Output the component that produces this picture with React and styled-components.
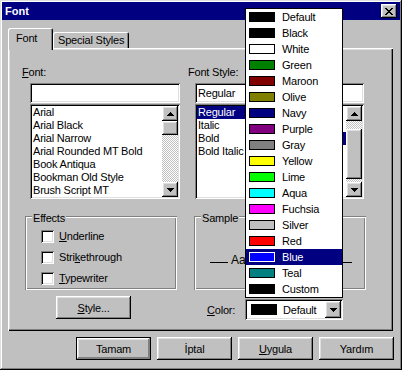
import React from "react";
import styled, { createGlobalStyle, css } from "styled-components";

const Global = createGlobalStyle`
  html, body { margin: 0; padding: 0; background: #c0c0c0; }
  body {
    font-family: "Liberation Sans", Arial, sans-serif;
    font-size: 11px;
    letter-spacing: -0.2px;
    color: #000;
  }
  * { box-sizing: border-box; }
`;

const raised = css`
  box-shadow: inset -1px -1px #000, inset 1px 1px #fff, inset -2px -2px #808080,
    inset 2px 2px #dfdfdf;
`;
const sunken = css`
  box-shadow: inset 1px 1px #808080, inset -1px -1px #fff, inset 2px 2px #000,
    inset -2px -2px #dfdfdf;
`;
const dither = css`
  background: repeating-conic-gradient(#c0c0c0 0 25%, #fff 0 50%) 0 0 / 2px 2px;
`;

const Dialog = styled.div`
  position: relative;
  width: 402px;
  height: 370px;
  padding: 2px;
  background: #c0c0c0;
  box-shadow: inset -1px -1px #000, inset 1px 1px #dfdfdf, inset -2px -2px #808080,
    inset 2px 2px #fff;
  display: flex;
  flex-direction: column;
`;

const TitleBar = styled.div`
  height: 18px;
  flex: none;
  background: #000080;
  color: #fff;
  display: flex;
  align-items: center;
  justify-content: space-between;
  padding: 0 3px 0 3px;
`;

const TitleText = styled.span`
  font-weight: bold;
  font-size: 11px;
  letter-spacing: 0;
`;

const CloseButton = styled.div`
  width: 16px;
  height: 14px;
  background: #c0c0c0;
  ${raised};
  display: flex;
  align-items: center;
  justify-content: center;
`;

const Body = styled.div`
  padding: 8px 6px 0 6px;
  display: flex;
  flex-direction: column;
`;

const TabStrip = styled.div`
  height: 20px;
  display: flex;
  align-items: flex-end;
`;

const Tab = styled.div`
  position: relative;
  z-index: ${(p) => (p.$active ? 1 : 0)};
  width: ${(p) => p.$w}px;
  height: ${(p) => (p.$active ? 22 : 16)}px;
  margin-bottom: ${(p) => (p.$active ? -2 : 0)}px;
  padding: 0 0 ${(p) => (p.$active ? 2 : 0)}px ${(p) => p.$pad}px;
  display: flex;
  align-items: center;
  white-space: nowrap;
  background: #c0c0c0;
  border-radius: 2px 2px 0 0;
  box-shadow: inset 1px 1px #fff, inset -1px 0 #000, inset -2px 0 #808080;
`;

const Panel = styled.div`
  width: 385px;
  height: 283px;
  flex: none;
  box-shadow: inset 1px 1px #fff, inset -1px -1px #000, inset -2px -2px #808080,
    inset 2px 2px #dfdfdf;
  padding-top: 18px;
`;

const TopGrid = styled.div`
  margin-left: 14px;
  display: grid;
  grid-template-columns: 158px 100px 68px;
  column-gap: 8px;
`;

const Column = styled.div`
  display: flex;
  flex-direction: column;
`;

const Label = styled.div`
  line-height: 13px;
  height: 13px;
  margin-bottom: 4px;
  white-space: nowrap;
`;

const Key = styled.span`
  text-decoration: underline;
`;

const Field = styled.div`
  margin-left: ${(p) => p.$indent}px;
  display: flex;
  flex-direction: column;
`;

const TextBox = styled.div`
  height: 20px;
  background: #fff;
  ${sunken};
  padding: 0 3px;
  display: flex;
  align-items: center;
  white-space: nowrap;
  overflow: hidden;
`;

const ListBox = styled.div`
  margin-top: 1px;
  height: 95px;
  background: #fff;
  ${sunken};
  padding: 2px;
  display: flex;
`;

const Rows = styled.div`
  flex: 1;
  min-width: 0;
  overflow: hidden;
`;

const Row = styled.div`
  height: 13px;
  line-height: 13px;
  padding-left: 1px;
  white-space: nowrap;
  background: ${(p) => (p.$selected ? "#000080" : "transparent")};
  color: ${(p) => (p.$selected ? "#fff" : "#000")};
`;

const ScrollTrack = styled.div`
  width: 16px;
  flex: none;
  display: flex;
  flex-direction: column;
`;

const ScrollBtn = styled.div`
  height: 15px;
  flex: none;
  background: #c0c0c0;
  ${raised};
  display: flex;
  align-items: center;
  justify-content: center;
`;

const TrackPart = styled.div`
  ${dither};
  flex: ${(p) => (p.$grow ? "1 1 0" : "none")};
  height: ${(p) => (p.$grow ? "auto" : `${p.$h}px`)};
`;

const Thumb = styled.div`
  flex: none;
  height: ${(p) => p.$h}px;
  background: #c0c0c0;
  ${raised};
`;

const BottomGrid = styled.div`
  margin: 17px 0 0 17px;
  display: grid;
  grid-template-columns: 152px 172px;
  column-gap: 17px;
  row-gap: 6px;
  align-items: start;
`;

const GroupBox = styled.div`
  position: relative;
  height: 74px;
  box-shadow: inset 1px 1px #808080, inset -1px -1px #fff, inset 2px 2px #fff,
    inset -2px -2px #808080;
  padding: ${(p) => (p.$sample ? "37px 14px 0 16px" : "14px 0 0 16px")};
`;

const Legend = styled.span`
  position: absolute;
  top: -4px;
  left: 7px;
  padding: 0 1px;
  line-height: 13px;
  background: #c0c0c0;
`;

const CheckList = styled.div`
  display: flex;
  flex-direction: column;
  gap: 8px;
`;

const CheckRow = styled.div`
  display: flex;
  align-items: center;
  gap: 5px;
  height: 13px;
  line-height: 13px;
`;

const CheckBox = styled.span`
  width: 13px;
  height: 13px;
  flex: none;
  background: #fff;
  ${sunken};
`;

const SampleRow = styled.div`
  display: flex;
  align-items: flex-start;
`;

const SampleLine = styled.span`
  height: 1px;
  margin-top: 9px;
  background: #000;
  flex: ${(p) => (p.$grow ? "1 1 0" : "none")};
  width: ${(p) => (p.$grow ? "auto" : "18px")};
`;

const SampleText = styled.span`
  font-size: 12px;
  line-height: 14px;
  letter-spacing: 0;
  margin: 0 3px;
  white-space: nowrap;
`;

const Button = styled.div`
  width: 75px;
  height: 23px;
  display: flex;
  align-items: center;
  justify-content: center;
  background: #c0c0c0;
  ${raised};
  ${(p) =>
    p.$default &&
    css`
      border: 1px solid #000;
      box-shadow: inset -1px -1px #808080, inset 1px 1px #fff, inset -2px -2px #808080,
        inset 2px 2px #dfdfdf;
    `}
`;

const StyleButton = styled(Button)`
  margin-left: 31px;
`;

const ColorField = styled.div`
  padding: 3px 0 0 13px;
  display: flex;
  align-items: center;
`;

const ColorLabel = styled.span`
  width: 38px;
`;

const ComboWrap = styled.div`
  position: relative;
  width: 98px;
`;

const Combo = styled.div`
  height: 21px;
  background: #fff;
  ${sunken};
  padding: 2px;
  display: flex;
  align-items: center;
`;

const ComboSwatch = styled.span`
  width: 26px;
  height: 11px;
  margin-left: 4px;
  background: #000;
`;

const ComboText = styled.span`
  margin-left: 6px;
  flex: 1;
`;

const ComboButton = styled.div`
  width: 16px;
  height: 17px;
  background: #c0c0c0;
  ${raised};
  display: flex;
  align-items: center;
  justify-content: center;
`;

const DropList = styled.div`
  position: absolute;
  left: 0;
  bottom: calc(100% + 1px);
  width: 98px;
  z-index: 10;
  background: #fff;
  border: 1px solid #000;
`;

const DropItem = styled.div`
  height: 16px;
  display: flex;
  align-items: center;
  padding-left: 3px;
  background: ${(p) => (p.$selected ? "#000080" : "#fff")};
  color: ${(p) => (p.$selected ? "#fff" : "#000")};
`;

const Swatch = styled.span`
  width: 26px;
  height: 10px;
  flex: none;
  border: 1px solid ${(p) => (p.$selected ? "#fff" : "#000")};
  background: ${(p) => p.$color};
`;

const DropText = styled.span`
  margin-left: 7px;
`;

const ButtonRow = styled.div`
  margin-top: 6px;
  display: flex;
  justify-content: flex-end;
  gap: 6px;
`;

const Arrow = ({ dir }) => (
  <svg width="7" height="4" viewBox="0 0 7 4" shapeRendering="crispEdges">
    <path
      fill="#000"
      d={
        dir === "up"
          ? "M3 0h1v1h1v1h1v1h1v1H0V3h1V2h1V1h1z"
          : "M0 0h7v1H6v1H5v1H4v1H3V3H2V2H1V1H0z"
      }
    />
  </svg>
);

const xPixels = [
  [0, 0, 2], [6, 0, 2],
  [1, 1, 2], [5, 1, 2],
  [2, 2, 4],
  [3, 3, 2],
  [2, 4, 4],
  [1, 5, 2], [5, 5, 2],
  [0, 6, 2], [6, 6, 2],
];

const CloseGlyph = () => (
  <svg width="8" height="7" viewBox="0 0 8 7" shapeRendering="crispEdges">
    {xPixels.map(([x, y, w], i) => (
      <rect key={i} x={x} y={y} width={w} height={1} fill="#000" />
    ))}
  </svg>
);

const Scrollbar = ({ before, thumb }) => (
  <ScrollTrack>
    <ScrollBtn>
      <Arrow dir="up" />
    </ScrollBtn>
    {before > 0 && <TrackPart $h={before} />}
    <Thumb $h={thumb} />
    <TrackPart $grow />
    <ScrollBtn>
      <Arrow dir="down" />
    </ScrollBtn>
  </ScrollTrack>
);

const fonts = [
  "Arial",
  "Arial Black",
  "Arial Narrow",
  "Arial Rounded MT Bold",
  "Book Antiqua",
  "Bookman Old Style",
  "Brush Script MT",
];
const styles = ["Regular", "Italic", "Bold", "Bold Italic"];
/* the size list lies under the open colour list; only its edge shows */
const sizeRows = 7;
const selectedSize = 2;

const colors = [
  ["Default", "#000000"],
  ["Black", "#000000"],
  ["White", "#ffffff"],
  ["Green", "#008000"],
  ["Maroon", "#800000"],
  ["Olive", "#808000"],
  ["Navy", "#000080"],
  ["Purple", "#800080"],
  ["Gray", "#808080"],
  ["Yellow", "#ffff00"],
  ["Lime", "#00ff00"],
  ["Aqua", "#00ffff"],
  ["Fuchsia", "#ff00ff"],
  ["Silver", "#c0c0c0"],
  ["Red", "#ff0000"],
  ["Blue", "#0000ff"],
  ["Teal", "#008080"],
  ["Custom", "#000000"],
];

export default function App() {
  return (
    <>
      <Global />
      <Dialog>
        <TitleBar>
          <TitleText>Font</TitleText>
          <CloseButton aria-label="Close">
            <CloseGlyph />
          </CloseButton>
        </TitleBar>
        <Body>
          <TabStrip>
            <Tab $active $w={45} $pad={8}>
              Font
            </Tab>
            <Tab $w={76} $pad={5}>
              Special Styles
            </Tab>
          </TabStrip>
          <Panel>
            <TopGrid>
              <Column>
                <Label>
                  <Key>F</Key>ont:
                </Label>
                <Field $indent={8}>
                  <TextBox />
                  <ListBox>
                    <Rows>
                      {fonts.map((f) => (
                        <Row key={f}>{f}</Row>
                      ))}
                    </Rows>
                    <Scrollbar before={0} thumb={14} />
                  </ListBox>
                </Field>
              </Column>
              <Column>
                <Label>Font Style:</Label>
                <Field $indent={7}>
                  <TextBox>Regular</TextBox>
                  <ListBox>
                    <Rows>
                      {styles.map((s, i) => (
                        <Row key={s} $selected={i === 0}>
                          {s}
                        </Row>
                      ))}
                    </Rows>
                  </ListBox>
                </Field>
              </Column>
              <Column>
                <Label />
                <Field $indent={0}>
                  <TextBox />
                  <ListBox>
                    <Rows>
                      {Array.from({ length: sizeRows }, (_, i) => (
                        <Row key={i} $selected={i === selectedSize} />
                      ))}
                    </Rows>
                    <Scrollbar before={8} thumb={50} />
                  </ListBox>
                </Field>
              </Column>
            </TopGrid>
            <BottomGrid>
              <GroupBox>
                <Legend>Effects</Legend>
                <CheckList>
                  <CheckRow>
                    <CheckBox />
                    <span>
                      <Key>U</Key>nderline
                    </span>
                  </CheckRow>
                  <CheckRow>
                    <CheckBox />
                    <span>
                      Stri<Key>k</Key>ethrough
                    </span>
                  </CheckRow>
                  <CheckRow>
                    <CheckBox />
                    <span>
                      <Key>T</Key>ypewriter
                    </span>
                  </CheckRow>
                </CheckList>
              </GroupBox>
              <GroupBox $sample>
                <Legend>Sample</Legend>
                <SampleRow>
                  <SampleLine />
                  <SampleText>Aa</SampleText>
                  <SampleLine $grow />
                </SampleRow>
              </GroupBox>
              <StyleButton>
                <span>
                  <Key>S</Key>tyle...
                </span>
              </StyleButton>
              <ColorField>
                <ColorLabel>
                  <Key>C</Key>olor:
                </ColorLabel>
                <ComboWrap>
                  <DropList>
                    {colors.map(([name, c]) => (
                      <DropItem key={name} $selected={name === "Blue"}>
                        <Swatch $color={c} $selected={name === "Blue"} />
                        <DropText>{name}</DropText>
                      </DropItem>
                    ))}
                  </DropList>
                  <Combo>
                    <ComboSwatch />
                    <ComboText>Default</ComboText>
                    <ComboButton>
                      <Arrow dir="down" />
                    </ComboButton>
                  </Combo>
                </ComboWrap>
              </ColorField>
            </BottomGrid>
          </Panel>
          <ButtonRow>
            <Button $default>Tamam</Button>
            <Button>İptal</Button>
            <Button>
              <span>
                <Key>U</Key>ygula
              </span>
            </Button>
            <Button>Yardım</Button>
          </ButtonRow>
        </Body>
      </Dialog>
    </>
  );
}
